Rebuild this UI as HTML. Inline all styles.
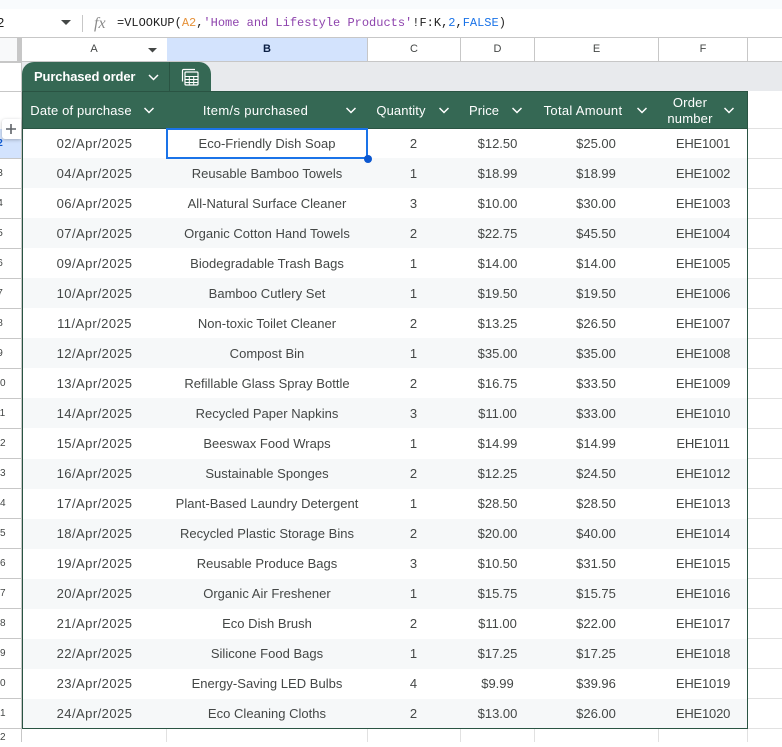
<!DOCTYPE html>
<html><head><meta charset="utf-8">
<style>
html,body{margin:0;padding:0;background:#fff}
body{width:782px;height:742px;position:relative;overflow:hidden;font-family:"Liberation Sans",sans-serif;color:#444746}
.a{position:absolute}
.ln{position:absolute;background:#e1e1e1}
.hl{position:absolute;background:#c7c7c7}
.col{position:absolute;top:38px;height:23px;line-height:23px;text-align:center;font-size:11px;color:#444746}
.rn{position:absolute;left:-22px;width:44px;text-align:center;font-size:10px;color:#444746;height:29px;line-height:29px}
table{position:absolute;left:22px;top:91px;width:726px;height:638px;border-collapse:collapse;table-layout:fixed;font-size:13px;color:#444746;box-sizing:border-box}
td,th{padding:0;text-align:center;overflow:hidden;white-space:nowrap}
td:nth-child(1){letter-spacing:.45px}
td:nth-child(2){letter-spacing:.02px}
td:nth-child(4){padding-left:1px;box-sizing:border-box}
td:nth-child(6){letter-spacing:-.2px}
tbody tr{height:30px}
tbody tr:nth-child(even){background:#f6f8f9}
thead tr{height:37px;background:#356854;color:#fff}
th{font-weight:normal;position:relative;font-size:13px;line-height:16px}
th span{position:absolute;top:calc(50% + 1px);transform:translateY(-50%);text-align:center;white-space:nowrap}
th svg{position:absolute;top:16px;width:10px;height:7px}
.chev{fill:none;stroke:#fff;stroke-width:1.5}
</style></head><body>
<div class="a" style="left:0;top:0;width:782px;height:9px;background:#f9fbfd"></div>
<div class="hl" style="left:0;top:37px;width:782px;height:1px"></div>
<div class="a" style="left:-3px;top:14px;font-size:13px;color:#1f1f1f;line-height:18px">2</div>
<svg class="a" style="left:61px;top:20px" width="10" height="6"><path d="M0 0H10L5 5Z" fill="#444746"/></svg>
<div class="a" style="left:82px;top:15px;width:1px;height:17px;background:#c7c7c7"></div>
<div class="a" style="left:94px;top:14px;font:italic 16px/20px 'Liberation Serif',serif;color:#8a8a8a">fx</div>
<div class="a" style="left:117px;top:15px;font:12px/17px 'Liberation Mono',monospace;color:#1f1f1f;white-space:pre">=VLOOKUP(<span style="color:#e69138">A2</span>,<span style="color:#8e44ad">'Home and Lifestyle Products'</span>!F:K,<span style="color:#1a73e8">2</span>,<span style="color:#1a73e8">FALSE</span>)</div>

<div class="a" style="left:0;top:38px;width:17px;height:23px;background:#f8f9fa"></div>
<div class="a" style="left:17px;top:38px;width:5px;height:23px;background:#c7c7c7"></div>
<div class="a" style="left:0;top:61px;width:22px;height:2px;background:#c7c7c7"></div>
<div class="a" style="left:167px;top:38px;width:200px;height:23px;background:#d3e3fd"></div>
<div class="hl" style="left:22px;top:61px;width:760px;height:1px"></div>
<div class="hl" style="left:367px;top:38px;width:1px;height:23px"></div>
<div class="hl" style="left:460px;top:38px;width:1px;height:23px"></div>
<div class="hl" style="left:534px;top:38px;width:1px;height:23px"></div>
<div class="hl" style="left:658px;top:38px;width:1px;height:23px"></div>
<div class="hl" style="left:747px;top:38px;width:1px;height:23px"></div>
<div class="col" style="left:22px;width:144px">A</div>
<svg class="a" style="left:148px;top:48px" width="10" height="6"><path d="M0 0H9L4.500 4.500Z" fill="#444746"/></svg>
<div class="col" style="left:167px;width:200px;font-weight:bold;color:#0b1f44">B</div>
<div class="col" style="left:368px;width:92px">C</div>
<div class="col" style="left:461px;width:73px">D</div>
<div class="col" style="left:535px;width:123px">E</div>
<div class="col" style="left:659px;width:88px">F</div>

<div class="a" style="left:22px;top:62px;width:760px;height:29px;background:#e8eaed"></div>

<div class="a" style="left:0;top:129px;width:21px;height:29px;background:#d3e3fd"></div>
<div class="a" style="left:21px;top:38px;width:1px;height:704px;background:#c7c7c7"></div>
<div class="ln" style="left:0;top:91px;width:22px;height:1px;background:#c7c7c7"></div>
<div class="ln" style="left:0;top:158px;width:22px;height:1px;background:#c7c7c7"></div>
<div class="ln" style="left:0;top:188px;width:22px;height:1px;background:#c7c7c7"></div>
<div class="ln" style="left:0;top:218px;width:22px;height:1px;background:#c7c7c7"></div>
<div class="ln" style="left:0;top:248px;width:22px;height:1px;background:#c7c7c7"></div>
<div class="ln" style="left:0;top:278px;width:22px;height:1px;background:#c7c7c7"></div>
<div class="ln" style="left:0;top:308px;width:22px;height:1px;background:#c7c7c7"></div>
<div class="ln" style="left:0;top:338px;width:22px;height:1px;background:#c7c7c7"></div>
<div class="ln" style="left:0;top:368px;width:22px;height:1px;background:#c7c7c7"></div>
<div class="ln" style="left:0;top:398px;width:22px;height:1px;background:#c7c7c7"></div>
<div class="ln" style="left:0;top:428px;width:22px;height:1px;background:#c7c7c7"></div>
<div class="ln" style="left:0;top:458px;width:22px;height:1px;background:#c7c7c7"></div>
<div class="ln" style="left:0;top:488px;width:22px;height:1px;background:#c7c7c7"></div>
<div class="ln" style="left:0;top:518px;width:22px;height:1px;background:#c7c7c7"></div>
<div class="ln" style="left:0;top:548px;width:22px;height:1px;background:#c7c7c7"></div>
<div class="ln" style="left:0;top:578px;width:22px;height:1px;background:#c7c7c7"></div>
<div class="ln" style="left:0;top:608px;width:22px;height:1px;background:#c7c7c7"></div>
<div class="ln" style="left:0;top:638px;width:22px;height:1px;background:#c7c7c7"></div>
<div class="ln" style="left:0;top:668px;width:22px;height:1px;background:#c7c7c7"></div>
<div class="ln" style="left:0;top:698px;width:22px;height:1px;background:#c7c7c7"></div>
<div class="ln" style="left:0;top:728px;width:22px;height:1px;background:#c7c7c7"></div>
<div class="rn" style="top:129px;color:#0b57d0;font-weight:bold">2</div>
<div class="rn" style="top:159px">3</div>
<div class="rn" style="top:189px">4</div>
<div class="rn" style="top:219px">5</div>
<div class="rn" style="top:249px">6</div>
<div class="rn" style="top:279px">7</div>
<div class="rn" style="top:309px">8</div>
<div class="rn" style="top:339px">9</div>
<div class="rn" style="top:369px">10</div>
<div class="rn" style="top:399px">11</div>
<div class="rn" style="top:429px">12</div>
<div class="rn" style="top:459px">13</div>
<div class="rn" style="top:489px">14</div>
<div class="rn" style="top:519px">15</div>
<div class="rn" style="top:549px">16</div>
<div class="rn" style="top:579px">17</div>
<div class="rn" style="top:609px">18</div>
<div class="rn" style="top:639px">19</div>
<div class="rn" style="top:669px">20</div>
<div class="rn" style="top:699px">21</div>
<div class="rn" style="top:729px;height:18px;line-height:18px">22</div>

<div class="ln" style="left:748px;top:128px;width:34px;height:1px"></div>
<div class="ln" style="left:748px;top:158px;width:34px;height:1px"></div>
<div class="ln" style="left:748px;top:188px;width:34px;height:1px"></div>
<div class="ln" style="left:748px;top:218px;width:34px;height:1px"></div>
<div class="ln" style="left:748px;top:248px;width:34px;height:1px"></div>
<div class="ln" style="left:748px;top:278px;width:34px;height:1px"></div>
<div class="ln" style="left:748px;top:308px;width:34px;height:1px"></div>
<div class="ln" style="left:748px;top:338px;width:34px;height:1px"></div>
<div class="ln" style="left:748px;top:368px;width:34px;height:1px"></div>
<div class="ln" style="left:748px;top:398px;width:34px;height:1px"></div>
<div class="ln" style="left:748px;top:428px;width:34px;height:1px"></div>
<div class="ln" style="left:748px;top:458px;width:34px;height:1px"></div>
<div class="ln" style="left:748px;top:488px;width:34px;height:1px"></div>
<div class="ln" style="left:748px;top:518px;width:34px;height:1px"></div>
<div class="ln" style="left:748px;top:548px;width:34px;height:1px"></div>
<div class="ln" style="left:748px;top:578px;width:34px;height:1px"></div>
<div class="ln" style="left:748px;top:608px;width:34px;height:1px"></div>
<div class="ln" style="left:748px;top:638px;width:34px;height:1px"></div>
<div class="ln" style="left:748px;top:668px;width:34px;height:1px"></div>
<div class="ln" style="left:748px;top:698px;width:34px;height:1px"></div>
<div class="ln" style="left:748px;top:728px;width:34px;height:1px"></div>
<div class="ln" style="left:166px;top:729px;width:1px;height:13px"></div>
<div class="ln" style="left:367px;top:729px;width:1px;height:13px"></div>
<div class="ln" style="left:460px;top:729px;width:1px;height:13px"></div>
<div class="ln" style="left:534px;top:729px;width:1px;height:13px"></div>
<div class="ln" style="left:658px;top:729px;width:1px;height:13px"></div>
<div class="ln" style="left:747px;top:729px;width:1px;height:13px"></div>

<div class="a" style="left:22px;top:62px;width:189px;height:30px;background:#356854;border-radius:12px 12px 0 0"></div>
<div class="a" style="left:169px;top:62px;width:1px;height:29px;background:#2a5443"></div>
<div class="a" style="left:34px;top:69px;color:#fff;font-size:13px;font-weight:bold;letter-spacing:-.13px;line-height:16px;white-space:nowrap">Purchased order</div>
<svg class="a" style="left:148px;top:74px" width="11" height="7"><path class="chev" d="M1 1L5.500 5.500L10 1"/></svg>
<svg class="a" style="left:181px;top:68px" width="18" height="18" fill="none" stroke="#fff"><path d="M1.500 13.500V2.500A1 1 0 0 1 2.500 1.500H14" stroke-width="1.200"/><rect x="4" y="4" width="13" height="13" rx="1" stroke-width="1.200"/><path d="M4 8.500H17M4 11.500H17M4 14.500H17M8.300 8.500V17M12.700 8.500V17" stroke-width="1"/></svg>

<table>
<colgroup><col style="width:145px"><col style="width:200px"><col style="width:93px"><col style="width:74px"><col style="width:124px"><col style="width:90px"></colgroup>
<thead><tr>
<th><span style="left:8px;width:102px;letter-spacing:.15px">Date of purchase</span><svg viewBox="0 0 10 7" style="left:122px"><path class="chev" d="M.5 1L5 5.500L9.500 1"/></svg></th>
<th><span style="left:16px;width:145px;letter-spacing:.35px">Item/s purchased</span><svg viewBox="0 0 10 7" style="left:179px"><path class="chev" d="M.5 1L5 5.500L9.500 1"/></svg></th>
<th><span style="left:9px;width:50px;letter-spacing:.1px">Quantity</span><svg viewBox="0 0 10 7" style="left:72px"><path class="chev" d="M.5 1L5 5.500L9.500 1"/></svg></th>
<th><span style="left:9px;width:30px;letter-spacing:.1px">Price</span><svg viewBox="0 0 10 7" style="left:52px"><path class="chev" d="M.5 1L5 5.500L9.500 1"/></svg></th>
<th><span style="left:9px;width:80px;letter-spacing:.3px">Total Amount</span><svg viewBox="0 0 10 7" style="left:103px"><path class="chev" d="M.5 1L5 5.500L9.500 1"/></svg></th>
<th><span style="left:7px;width:50px;letter-spacing:.2px">Order<br>number</span><svg viewBox="0 0 10 7" style="left:66px"><path class="chev" d="M.5 1L5 5.500L9.500 1"/></svg></th>
</tr></thead>
<tbody>
<tr><td>02/Apr/2025</td><td>Eco-Friendly Dish Soap</td><td>2</td><td>$12.50</td><td>$25.00</td><td>EHE1001</td></tr>
<tr><td>04/Apr/2025</td><td>Reusable Bamboo Towels</td><td>1</td><td>$18.99</td><td>$18.99</td><td>EHE1002</td></tr>
<tr><td>06/Apr/2025</td><td>All-Natural Surface Cleaner</td><td>3</td><td>$10.00</td><td>$30.00</td><td>EHE1003</td></tr>
<tr><td>07/Apr/2025</td><td>Organic Cotton Hand Towels</td><td>2</td><td>$22.75</td><td>$45.50</td><td>EHE1004</td></tr>
<tr><td>09/Apr/2025</td><td>Biodegradable Trash Bags</td><td>1</td><td>$14.00</td><td>$14.00</td><td>EHE1005</td></tr>
<tr><td>10/Apr/2025</td><td>Bamboo Cutlery Set</td><td>1</td><td>$19.50</td><td>$19.50</td><td>EHE1006</td></tr>
<tr><td>11/Apr/2025</td><td>Non-toxic Toilet Cleaner</td><td>2</td><td>$13.25</td><td>$26.50</td><td>EHE1007</td></tr>
<tr><td>12/Apr/2025</td><td>Compost Bin</td><td>1</td><td>$35.00</td><td>$35.00</td><td>EHE1008</td></tr>
<tr><td>13/Apr/2025</td><td>Refillable Glass Spray Bottle</td><td>2</td><td>$16.75</td><td>$33.50</td><td>EHE1009</td></tr>
<tr><td>14/Apr/2025</td><td>Recycled Paper Napkins</td><td>3</td><td>$11.00</td><td>$33.00</td><td>EHE1010</td></tr>
<tr><td>15/Apr/2025</td><td>Beeswax Food Wraps</td><td>1</td><td>$14.99</td><td>$14.99</td><td>EHE1011</td></tr>
<tr><td>16/Apr/2025</td><td>Sustainable Sponges</td><td>2</td><td>$12.25</td><td>$24.50</td><td>EHE1012</td></tr>
<tr><td>17/Apr/2025</td><td>Plant-Based Laundry Detergent</td><td>1</td><td>$28.50</td><td>$28.50</td><td>EHE1013</td></tr>
<tr><td>18/Apr/2025</td><td>Recycled Plastic Storage Bins</td><td>2</td><td>$20.00</td><td>$40.00</td><td>EHE1014</td></tr>
<tr><td>19/Apr/2025</td><td>Reusable Produce Bags</td><td>3</td><td>$10.50</td><td>$31.50</td><td>EHE1015</td></tr>
<tr><td>20/Apr/2025</td><td>Organic Air Freshener</td><td>1</td><td>$15.75</td><td>$15.75</td><td>EHE1016</td></tr>
<tr><td>21/Apr/2025</td><td>Eco Dish Brush</td><td>2</td><td>$11.00</td><td>$22.00</td><td>EHE1017</td></tr>
<tr><td>22/Apr/2025</td><td>Silicone Food Bags</td><td>1</td><td>$17.25</td><td>$17.25</td><td>EHE1018</td></tr>
<tr><td>23/Apr/2025</td><td>Energy-Saving LED Bulbs</td><td>4</td><td>$9.99</td><td>$39.96</td><td>EHE1019</td></tr>
<tr><td>24/Apr/2025</td><td>Eco Cleaning Cloths</td><td>2</td><td>$13.00</td><td>$26.00</td><td>EHE1020</td></tr>
</tbody></table>
<div class="a" style="left:22px;top:91px;width:724px;height:636px;border:1px solid #2a5443;pointer-events:none"></div>
<div class="a" style="left:23px;top:128px;width:724px;height:1px;background:#2a5443"></div>

<div class="a" style="left:166px;top:128px;width:198px;height:27px;border:2px solid #1a73e8"></div>
<div class="a" style="left:364px;top:155px;width:8px;height:8px;border-radius:50%;background:#0b57d0"></div>

<div class="a" style="left:2px;top:119px;width:19px;height:20px;background:#fff;border-radius:3px 0 0 3px;box-shadow:0 1px 3px rgba(60,64,67,.35)"></div>
<svg class="a" style="left:5px;top:123px" width="12" height="12"><path d="M6 1V11M1 6H11" stroke="#5f6368" stroke-width="1.600" fill="none"/></svg>
</body></html>
